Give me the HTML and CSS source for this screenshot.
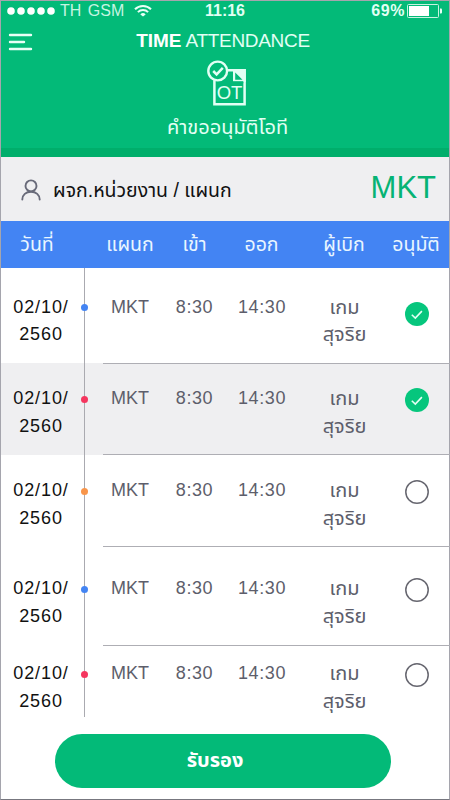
FILE: index.html
```html
<!DOCTYPE html>
<html lang="th">
<head>
  <meta charset="UTF-8">
  <meta name="viewport" content="width=device-width, initial-scale=1">
  <title>Time Attendance</title>
  <link rel="stylesheet" href="styles.css">
</head>
<body>
  <div class="screen">
    <header class="header">
      <div class="status">
        <div class="carrier">
          <svg class="signal" width="50" height="8" viewBox="0 0 50 8" fill="#fff"><circle cx="4" cy="4" r="3.8"/><circle cx="14" cy="4" r="3.8"/><circle cx="24" cy="4" r="3.8"/><circle cx="34" cy="4" r="3.8"/><circle cx="44" cy="4" r="3.8"/></svg>
          <span class="network">TH GSM</span>
          <svg class="wifi" width="18" height="13" viewBox="0 0 18 13" fill="none" stroke="#e8fff6" stroke-width="2"><path d="M1 5.2a11.3 11.3 0 0 1 16 0M3.9 8.1a7.2 7.2 0 0 1 10.2 0"/><path d="M6.3 10.4a3.8 3.8 0 0 1 5.4 0L9 12.6z" fill="#e8fff6" stroke="none"/></svg>
        </div>
        <div class="clock">11:16</div>
        <div class="power">
          <span>69%</span>
          <svg width="36" height="14" viewBox="0 0 36 14"><rect x=".5" y=".5" width="31" height="13" rx="1" fill="none" stroke="#c8f3e1"/><path d="M2 2h20v10H2z" fill="#fff"/><path d="M33 4.5h1a1 1 0 0 1 1 1v3a1 1 0 0 1-1 1h-1z" fill="#e8fff6"/></svg>
        </div>
      </div>
      <div class="title-bar">
        <svg class="menu" width="26" height="18" viewBox="0 0 26 18" fill="none" stroke="#e8fff6" stroke-width="2.4" stroke-linecap="round"><path d="M2 2h21M2 9h14M2 16h21"/></svg>
        <h1 class="title"><b>TIME</b> ATTENDANCE</h1>
      </div>
      <div class="page">
        <svg class="ot-icon" width="42" height="50" viewBox="0 0 42 50" fill="none" stroke="#e2fff4">
          <path d="M8.4 23.5v23.8h30.2V13.2H21" stroke-width="2.5"/>
          <path d="M27 12h12.8v13H27zM29.2 15.5v7.3h7.3z" fill="#e2fff4" stroke="none" fill-rule="evenodd"/>
          <path d="M27 24.2h10.3v2H27z" fill="#03ba78" stroke="none"/>
          <circle cx="11.7" cy="14" r="9.4" stroke-width="2.4"/>
          <path d="M7.2 14l3.4 3.4 6.2-6.6" stroke-width="2.5"/>
          <text class="ot-text" x="23.6" y="41.6" text-anchor="middle">OT</text>
        </svg>
        <h2 class="page-name">คำขออนุมัติโอที</h2>
      </div>
    </header>

    <div class="unit">
      <svg class="person" width="20" height="22" viewBox="0 0 20 22" fill="none" stroke="#686a79" stroke-width="1.9" stroke-linecap="round"><circle cx="10" cy="6.9" r="5.5"/><path d="M1.3 20.5c0-4.6 3.7-7.8 8.7-7.8s8.7 3.2 8.7 7.8"/></svg>
      <span class="unit-name">ผจก.หน่วยงาน / แผนก</span>
      <span class="unit-code">MKT</span>
    </div>

    <div class="cols table-head">
      <span>วันที่</span><span>แผนก</span><span>เข้า</span><span>ออก</span><span>ผู้เบิก</span><span>อนุมัติ</span>
    </div>

    <main class="list">
      <div class="cols row row-1">
        <div class="date">02/10/<br>2560</div><div>MKT</div><div class="time">8:30</div><div class="time">14:30</div><div class="name">เกม<br>สุจริย</div>
        <div class="state"><svg class="check on" viewBox="0 0 24 24"><path d="M6.8 12.7l3.5 3.4 6.6-7"/></svg></div>
        <i class="dot blue"></i>
      </div>
      <div class="cols row row-2 selected">
        <div class="date">02/10/<br>2560</div><div>MKT</div><div class="time">8:30</div><div class="time">14:30</div><div class="name">เกม<br>สุจริย</div>
        <div class="state"><svg class="check on" viewBox="0 0 24 24"><path d="M6.8 12.7l3.5 3.4 6.6-7"/></svg></div>
        <i class="dot red"></i>
      </div>
      <div class="cols row row-3">
        <div class="date">02/10/<br>2560</div><div>MKT</div><div class="time">8:30</div><div class="time">14:30</div><div class="name">เกม<br>สุจริย</div>
        <div class="state"><svg class="check" viewBox="0 0 24 24"><circle cx="12" cy="12" r="11.2"/></svg></div>
        <i class="dot orange"></i>
      </div>
      <div class="cols row row-4">
        <div class="date">02/10/<br>2560</div><div>MKT</div><div class="time">8:30</div><div class="time">14:30</div><div class="name">เกม<br>สุจริย</div>
        <div class="state"><svg class="check" viewBox="0 0 24 24"><circle cx="12" cy="12" r="11.2"/></svg></div>
        <i class="dot blue"></i>
      </div>
      <div class="cols row row-5">
        <div class="date">02/10/<br>2560</div><div>MKT</div><div class="time">8:30</div><div class="time">14:30</div><div class="name">เกม<br>สุจริย</div>
        <div class="state"><svg class="check" viewBox="0 0 24 24"><circle cx="12" cy="12" r="11.2"/></svg></div>
        <i class="dot red"></i>
      </div>
    </main>

    <footer class="footer">
      <button class="confirm">รับรอง</button>
    </footer>
  </div>
</body>
</html>
```
FILE: styles.css
```css
* {
  box-sizing: border-box;
}
body {
  margin: 0;
  font-family: "Liberation Sans", "Noto Sans Thai", "Noto Sans", sans-serif;
  font-size: 18px;
  color: #5d5e6b;
}
.screen {
  position: relative;
  width: 450px;
  height: 800px;
  display: flex;
  flex-direction: column;
  background: #fff;
  overflow: hidden;
}
.screen::after {
  content: "";
  position: absolute;
  inset: 0;
  border: 1px solid #a5a5ad;
  border-bottom-color: #77777f;
  pointer-events: none;
}
.header {
  height: 157px;
  flex: none;
  background: #03ba78;
  border-bottom: 9px solid #00ae6b;
  color: #e2fff4;
}
.status {
  height: 21px;
  padding: 0 7px;
  display: grid;
  grid-template-columns: 1fr auto 1fr;
  align-items: center;
  font-size: 16px;
  line-height: 21px;
}
.carrier,
.power {
  display: flex;
  align-items: center;
}
.network {
  margin-left: 3px;
  word-spacing: 2px;
  color: #c6f5e2;
}
.wifi {
  margin-left: 10px;
}
.clock {
  font-weight: bold;
}
.power {
  justify-content: flex-end;
  gap: 2px;
  font-weight: bold;
  letter-spacing: 0.6px;
}
.title-bar {
  position: relative;
  height: 40px;
  display: flex;
  justify-content: center;
}
.menu {
  position: absolute;
  left: 8px;
  top: 12px;
}
.title {
  margin: 9px 4px 0 0;
  font-size: 19px;
  line-height: 22px;
  font-weight: normal;
  letter-spacing: -0.3px;
}
.title b {
  color: #fff;
  letter-spacing: 0;
}
.page {
  display: flex;
  flex-direction: column;
  align-items: center;
}
.ot-icon {
  margin: -4px 0 0 4px;
}
.ot-text {
  font-size: 18.5px;
  fill: #e2fff4;
  stroke: none;
}
.page-name {
  margin: 6px 0 0 5px;
  font-size: 20px;
  line-height: 28px;
  font-weight: normal;
}
.unit {
  height: 64px;
  flex: none;
  padding: 0 14px 0 21px;
  display: flex;
  align-items: center;
  background: #efeff1;
}
.person {
  margin-top: 1px;
}
.unit-name {
  margin: 4px auto 0 12px;
  font-size: 19.5px;
  color: #111;
}
.unit-code {
  margin-top: -3px;
  font-size: 31px;
  color: #06b374;
}
.cols {
  display: grid;
  text-align: center;
}
.table-head {
  height: 47px;
  flex: none;
  grid-template-columns: 74px 112px 17px 117px 48px 82px;
  justify-content: start;
  justify-items: center;
  align-items: center;
  background: #4384f3;
  color: #e9f6ff;
  font-size: 19.5px;
  white-space: nowrap;
}
.table-head span:last-child {
  margin-left: 14px;
}
.list {
  position: relative;
}
.list::after {
  content: "";
  position: absolute;
  left: 84px;
  top: 0;
  bottom: 0;
  width: 1px;
  background: #aaaab0;
}
.row {
  position: relative;
  grid-template-columns: 82px 96px 33px 102px 63px 74px;
  line-height: 27.5px;
  padding-top: 22px;
}
.row > div {
  white-space: nowrap;
  justify-self: center;
}
.row:not(:last-child)::after {
  content: "";
  position: absolute;
  z-index: 1;
  left: 103px;
  right: 0;
  bottom: 0;
  height: 1px;
  background: #aeaeb4;
}
.row-1 {
  height: 95px;
  padding-top: 25.5px;
}
.row-2,
.row-3 {
  height: 92px;
}
.row-4 {
  height: 98px;
  padding-top: 28px;
}
.row.row-1::after,
.row.row-4::after {
  bottom: -1px;
}
.row-5 {
  height: 72px;
  padding-top: 15px;
}
.selected {
  background: #efeff1;
}
.date {
  color: #111;
  letter-spacing: 0.9px;
}
.time {
  letter-spacing: 0.6px;
}
.name {
  font-size: 20px;
}
.state {
  padding-top: 3px;
}
.row-1 .state {
  padding-top: 8px;
}
.check {
  display: block;
  width: 24px;
  height: 24px;
  margin-left: 7px;
  fill: none;
  stroke: #66666f;
  stroke-width: 1.5;
}
.check.on {
  border-radius: 50%;
  background: #06c67d;
  stroke: #e2fff4;
  stroke-width: 1.6;
}
.dot {
  position: absolute;
  z-index: 1;
  left: 81px;
  top: 33px;
  width: 7px;
  height: 7px;
  border-radius: 50%;
}
.row-1 .dot {
  top: 36px;
}
.row-4 .dot {
  top: 39px;
}
.row-5 .dot {
  top: 26px;
}
.blue {
  background: #4384f3;
}
.red {
  background: #f5365f;
}
.orange {
  background: #f8954a;
}
.footer {
  flex: 1;
  padding-top: 17px;
  text-align: center;
}
.confirm {
  width: 336px;
  height: 54px;
  padding: 0 16px 0 0;
  border: 0;
  border-radius: 27px;
  margin-right: 4px;
  background: #03ba78;
  color: #fff;
  font: bold 20px "Liberation Sans", "Noto Sans Thai", sans-serif;
}
```
